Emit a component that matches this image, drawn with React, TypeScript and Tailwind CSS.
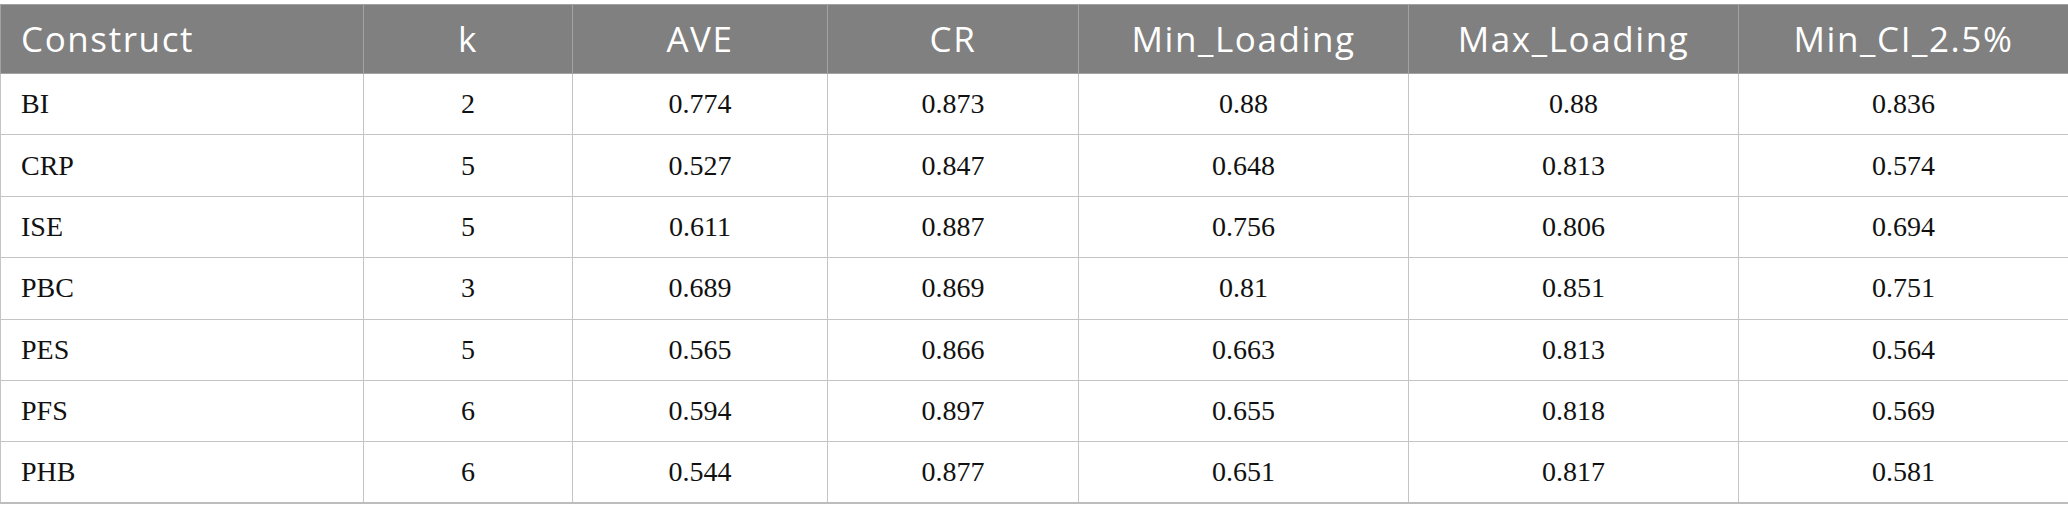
const headers = ["Construct", "k", "AVE", "CR", "Min_Loading", "Max_Loading", "Min_CI_2.5%"];

const rows: string[][] = [
  ["BI", "2", "0.774", "0.873", "0.88", "0.88", "0.836"],
  ["CRP", "5", "0.527", "0.847", "0.648", "0.813", "0.574"],
  ["ISE", "5", "0.611", "0.887", "0.756", "0.806", "0.694"],
  ["PBC", "3", "0.689", "0.869", "0.81", "0.851", "0.751"],
  ["PES", "5", "0.565", "0.866", "0.663", "0.813", "0.564"],
  ["PFS", "6", "0.594", "0.897", "0.655", "0.818", "0.569"],
  ["PHB", "6", "0.544", "0.877", "0.651", "0.817", "0.581"],
];

const widths = [363, 209, 255, 251, 330, 330, 330];

export default function App() {
  return (
    <div className="w-[2068px] h-[521px] bg-white pt-[4px]">
      <table className="table-fixed border-collapse w-[2068px] border border-b-2 border-[#bdbdbd]">
        <colgroup>
          {widths.map((w, i) => (
            <col key={i} style={{ width: w }} />
          ))}
        </colgroup>
        <thead>
          <tr className="h-[69px] bg-[#808080]">
            {headers.map((h, i) => (
              <th
                key={h}
                className={`border border-[#a3a3a3] font-normal text-white text-[35px] tracking-[1.6px] font-['Open_Sans',sans-serif] ${
                  i === 0 ? "text-left pl-[20px]" : "text-center"
                }`}
              >
                {h}
              </th>
            ))}
          </tr>
        </thead>
        <tbody>
          {rows.map((r) => (
            <tr key={r[0]} className="h-[61.4px]">
              {r.map((c, i) => (
                <td
                  key={i}
                  className={`border border-[#c4c4c4] text-[#111] text-[28px] font-['Liberation_Serif',serif] ${
                    i === 0 ? "text-left pl-[20px]" : "text-center"
                  }`}
                >
                  {c}
                </td>
              ))}
            </tr>
          ))}
        </tbody>
      </table>
    </div>
  );
}
